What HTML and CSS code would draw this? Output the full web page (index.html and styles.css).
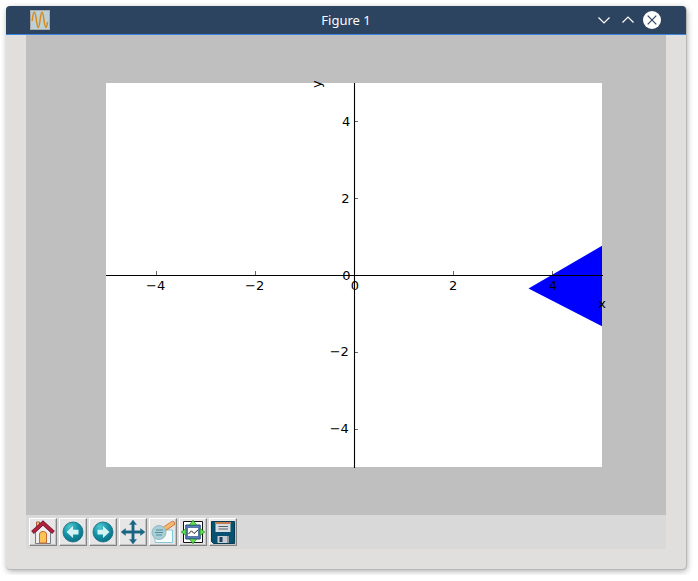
FILE: index.html
```html
<!DOCTYPE html>
<html lang="en">
<head>
<meta charset="utf-8">
<title>Figure 1</title>
<link rel="stylesheet" href="styles.css">
</head>
<body>
<main class="window">
  <header class="titlebar">
    <svg class="app-icon" width="20" height="20" viewBox="0 0 20 20">
      <rect x=".5" y=".5" width="19" height="19" fill="#bdd0d5" stroke="#a9abaa"/>
      <path d="M2.2 11C2.8 4 3.5 2.2 4.4 2.2C6.3 2.2 6.5 17.5 8.2 17.5C10 17.5 10.2 2.2 12 2.2C13.8 2.2 14.2 17.5 16 17.5C16.8 17.5 17.2 14.5 17.6 11.8" fill="none" stroke="#d68a1c" stroke-width="1.5"/>
    </svg>
    <h1 class="title">Figure 1</h1>
    <svg class="controls" width="68" height="20" viewBox="0 0 68 20" fill="none" stroke="#fff" stroke-width="1.2">
      <path d="M4.5 7.5L10 13L15.5 7.5M28.5 12.5L34 7L39.5 12.5"/>
      <circle cx="58" cy="10" r="9" fill="#fff" stroke="none"/>
      <path d="M53.7 5.7L62.3 14.3M62.3 5.7L53.7 14.3" stroke="#2d4461"/>
    </svg>
  </header>
  <section class="content">
    <svg class="canvas" width="640" height="480" viewBox="26 35 640 480">
      <rect x="106" y="83" width="496" height="384" fill="#fff"/>
      <path d="M528.5 288.5L602 245.8V326.3Z" fill="#00f"/>
      <path d="M156.5 275V271M255.5 275V271M453.5 275V271M552.5 275V271M354 121.5H358M354 198.5H358M354 352.5H358M354 429.5H358" stroke="#000" stroke-width=".6"/>
      <path d="M106 275.5H603M354.5 83V468" stroke="#000" stroke-width="1.1"/>
      <g class="labels">
        <text x="146" y="289.5">−4</text>
        <text x="245" y="289.5">−2</text>
        <text x="350.8" y="289.5">0</text>
        <text x="449" y="289.5">2</text>
        <text x="548.8" y="289.5">4</text>
        <text class="end" x="350.4" y="125.5">4</text>
        <text class="end" x="349.6" y="202.5">2</text>
        <text class="end" x="350.6" y="279.5">0</text>
        <text class="end" x="348.9" y="355.5">−2</text>
        <text class="end" x="348.9" y="432.5">−4</text>
        <text x="598.3" y="308">x</text>
        <text transform="translate(321 88) rotate(-90)">y</text>
      </g>
    </svg>
    <nav class="toolbar">
      <button class="tool" aria-label="Home"><svg viewBox="0 0 24 24">
        <path d="M5.5 2H8.5V8H5.5Z" fill="#f8c477" stroke="#a65a3a"/>
        <path d="M4.5 12L12 5L19.5 12V23.5H4.5Z" fill="#eeeef0" stroke="#777f85"/>
        <path d="M1.5 12.5L12 3L22.5 12.5" fill="none" stroke="#741e31" stroke-width="4"/>
        <path d="M2 12L12 3L22 12" fill="none" stroke="#b5203e" stroke-width="2.4"/>
        <path d="M8.5 23V14Q8.5 11.5 12 11.5T15.5 14V23Z" fill="#fbc454" stroke="#c66a36"/>
      </svg></button>
      <button class="tool" aria-label="Back"><svg viewBox="0 0 24 24">
        <circle cx="12" cy="12" r="10" fill="url(#orb)" stroke="#14677b" stroke-width=".8"/>
        <path d="M5.5 12L12 6V9.8H17.5V14.5H12V18Z" fill="#d4f3f2"/>
      </svg></button>
      <button class="tool" aria-label="Forward"><svg viewBox="0 0 24 24">
        <circle cx="12" cy="12" r="10" fill="url(#orb)" stroke="#14677b" stroke-width=".8"/>
        <path d="M18.5 12L12 6V9.8H6.5V14.5H12V18Z" fill="#d4f3f2"/>
      </svg></button>
      <button class="tool" aria-label="Pan"><svg viewBox="0 0 24 24">
        <path d="M12 0L15.5 4.5H13.2V10.8H19.5V8.5L24 12L19.5 15.5V13.2H13.2V19.5H15.5L12 24L8.5 19.5H10.8V13.2H4.5V15.5L0 12L4.5 8.5V10.8H10.8V4.5H8.5Z" fill="#1b6583" stroke="#1b6583" stroke-width=".4"/>
      </svg></button>
      <button class="tool" aria-label="Zoom to rectangle"><svg viewBox="0 0 24 24">
        <path d="M4 10H21.5V22.5H4Z" fill="#f7fbfc" stroke="#82c8d6"/>
        <path d="M14 8.5L21.5 3.5" stroke="#c9783a" stroke-width="5" stroke-linecap="round"/>
        <path d="M14 8.3L21.5 3.3" stroke="#f6b771" stroke-width="3.2" stroke-linecap="round"/>
        <circle cx="8" cy="12.5" r="7" fill="#a8ced6" stroke="#91b9c2"/>
        <path d="M5 10H12M4 12.5H12M5 15H11" stroke="#568f9f"/>
      </svg></button>
      <button class="tool" aria-label="Configure subplots"><svg viewBox="0 0 24 24">
        <path d="M2.5 1.5H21.5V22.5H2.5Z" fill="#fff" stroke="#111"/>
        <path d="M4.8 5H19.2V19H4.8Z" fill="#567dbd" stroke="#29467c"/>
        <path d="M6.5 7.5H17.5V16.5H6.5Z" fill="#fff" stroke="#274982" stroke-width=".6"/>
        <path d="M7.5 14L10.5 10.8L13 13.5L17 10" fill="none" stroke="#222"/>
        <path d="M12 .2L15.5 5H8.5ZM12 23.8L15.5 19H8.5ZM.2 12L5 8.5V15.5ZM23.8 12L19 8.5V15.5Z" fill="#5be34c" stroke="#268528" stroke-width=".7"/>
      </svg></button>
      <button class="tool" aria-label="Save"><svg viewBox="0 0 24 24">
        <path d="M.5 1.5H23.5V23.5H2.5L.5 21.5Z" fill="#07506f" stroke="#063b55"/>
        <path d="M4.5 2H19.5V12H4.5Z" fill="#d7dce0"/>
        <path d="M4.5 2H19.5V4H4.5Z" fill="#c57b50"/>
        <path d="M7.5 6.5H17M7.5 9H17" stroke="#55636d"/>
        <path d="M6.5 16H18V23H6.5Z" fill="#c5cbd0"/>
        <path d="M8.5 17H11.5V22H8.5Z" fill="#173f5d"/>
        <path d="M16 16H18V23H16Z" fill="#8c969f"/>
      </svg></button>
    </nav>
  </section>
  <svg class="defs" width="0" height="0"><defs><radialGradient id="orb" cx=".35" cy=".25" r=".8"><stop offset="0" stop-color="#50c8cf"/><stop offset=".5" stop-color="#1593a7"/><stop offset="1" stop-color="#087085"/></radialGradient></defs></svg>
</main>
</body>
</html>
```
FILE: styles.css
```css
* { box-sizing: border-box; }
body { margin: 0; padding: 6px; background: #fff; overflow: hidden; }
.window {
  width: 680px;
  height: 563px;
  background: #e0dfde;
  border-radius: 5px 5px 4px 4px;
  box-shadow: .5px .5px 0 .5px #b8b8b8, 1px 2px 6px rgba(0, 0, 0, .35);
}
.titlebar {
  display: grid;
  grid-template-columns: 68px 1fr 68px;
  align-items: center;
  height: 29px;
  padding: 0 24px;
  background: #2d4461;
  border-bottom: 1px solid #3d85df;
  border-radius: 4px 4px 0 0;
}
.app-icon, .controls, .canvas, .tool svg { display: block; }
.title {
  margin: 0;
  color: #fcfcfc;
  font: 400 13px/18px "Noto Sans", sans-serif;
  text-align: center;
}
.content { width: 640px; margin-left: 20px; }
.canvas { background: #bfbfbf; }
.labels { font: 13px "DejaVu Sans", sans-serif; fill: #000; }
.end { text-anchor: end; }
.toolbar {
  display: flex;
  gap: 2px;
  height: 34px;
  padding: 3px;
  background: #d9d9d9;
}
.tool {
  width: 28px;
  height: 28px;
  padding: 1px;
  border: 1px solid;
  border-color: #fff #828282 #828282 #fff;
  background: #e6e6e6;
  box-shadow: inset -1px -1px #c3c3c3;
}
.tool svg { width: 24px; height: 24px; }
.defs { display: block; }
```
